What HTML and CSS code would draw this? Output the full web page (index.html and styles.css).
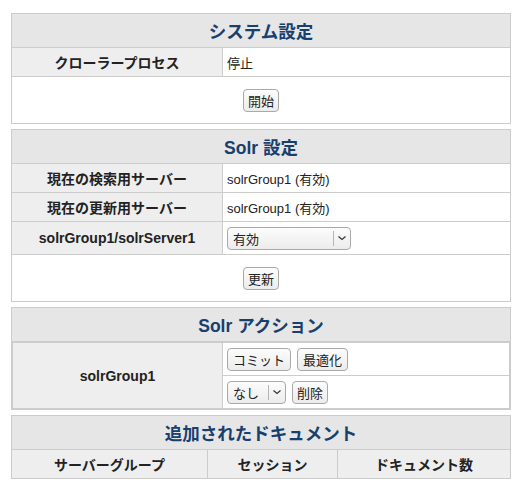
FILE: index.html
```html
<!DOCTYPE html>
<html lang="ja">
<head>
<meta charset="utf-8">
<title>システム設定</title>
<link rel="stylesheet" href="styles.css">
</head>
<body>
<div class="page">
  <table class="panel">
    <tr><th colspan="2" class="title">システム設定</th></tr>
    <tr><th class="label">クローラープロセス</th><td class="value">停止</td></tr>
    <tr><td colspan="2" class="actions"><button class="btn">開始</button></td></tr>
  </table>

  <table class="panel">
    <tr><th colspan="2" class="title">Solr 設定</th></tr>
    <tr><th class="label">現在の検索用サーバー</th><td class="value">solrGroup1 (有効)</td></tr>
    <tr><th class="label">現在の更新用サーバー</th><td class="value">solrGroup1 (有効)</td></tr>
    <tr><th class="label">solrGroup1/solrServer1</th><td class="value select-cell"><span class="select wide"><span class="select-text">有効</span><span class="select-arrow"><svg width="10" height="6" viewBox="0 0 10 6"><path d="M1.5 1.5 L5 4.5 L8.5 1.5" fill="none" stroke="#333" stroke-width="1.2"/></svg></span></span></td></tr>
    <tr><td colspan="2" class="actions"><button class="btn">更新</button></td></tr>
  </table>

  <table class="panel">
    <tr><th class="title">Solr アクション</th></tr>
    <tr><td class="nested-cell">
      <table class="inner">
        <tr>
          <th rowspan="2" class="label group">solrGroup1</th>
          <td class="value btn-cell"><button class="btn wide-pad">コミット</button><button class="btn wide-pad">最適化</button></td>
        </tr>
        <tr>
          <td class="value btn-cell"><span class="select small"><span class="select-text">なし</span><span class="select-arrow"><svg width="10" height="6" viewBox="0 0 10 6"><path d="M1.5 1.5 L5 4.5 L8.5 1.5" fill="none" stroke="#333" stroke-width="1.2"/></svg></span></span><button class="btn">削除</button></td>
        </tr>
      </table>
    </td></tr>
  </table>

  <table class="panel docs">
    <tr><th colspan="3" class="title">追加されたドキュメント</th></tr>
    <tr><th class="col1">サーバーグループ</th><th class="col2">セッション</th><th class="col3">ドキュメント数</th></tr>
  </table>
</div>
</body>
</html>
```

FILE: styles.css
```css
* { box-sizing: border-box; }
body {
  margin: 0;
  background: #fff;
  font-family: "Liberation Sans", "Noto Sans CJK JP", sans-serif;
  font-size: 13px;
  color: #222;
}
.page {
  padding: 13px 9px 0 11px;
  display: flex;
  flex-direction: column;
  gap: 5px;
}
.panel {
  width: 500px;
  border-collapse: collapse;
  border: 1px solid #ccc;
}
.panel th, .panel td {
  border: 1px solid #ccc;
}
.title {
  background: #e6e6e6;
  color: #17406f;
  font-size: 17.5px;
  font-weight: bold;
  height: 34px;
  padding: 0;
  text-align: center;
}
.label {
  background: #eeeeee;
  font-size: 14px;
  font-weight: bold;
  width: 211px;
  height: 29px;
  padding: 0 4px;
  text-align: center;
}
.value {
  text-align: left;
  padding: 0 4px;
  height: 29px;
}
.select-cell { height: 33px; }
.actions {
  text-align: center;
  height: 47px;
  padding: 0;
}
.btn {
  font-family: "Liberation Sans", "Noto Sans CJK JP", sans-serif;
  font-size: 13px;
  color: #222;
  height: 23px;
  padding: 0 4px;
  border: 1px solid #a9a9a9;
  border-radius: 4px;
  background: linear-gradient(#fcfcfc, #ececec);
  vertical-align: middle;
}
.btn.wide-pad { padding: 0 5px; }
.select {
  display: inline-flex;
  align-items: stretch;
  height: 23px;
  border: 1px solid #a9a9a9;
  border-radius: 4px;
  background: linear-gradient(#fcfcfc, #ececec);
  vertical-align: middle;
}
.select-text {
  display: flex;
  align-items: center;
  padding: 0 5px;
  flex: 1;
}
.select-arrow {
  display: flex;
  align-items: center;
  justify-content: center;
  width: 17px;
  border-left: 1px solid #b5b5b5;
  margin: 3px 0;
}
.select.wide { width: 124px; }
.select.small { width: 59px; }
.nested-cell { padding: 0; }
.inner {
  width: 100%;
  border-collapse: collapse;
  border: 1px solid #ccc;
}
.inner th, .inner td { border: 1px solid #ccc; }
.group { width: 210px; height: 66px; }
.btn-cell { height: 33px; padding: 0 4px; }
.btn-cell .btn + .btn, .btn-cell .select + .btn { margin-left: 6px; }
.docs th { background: #eeeeee; font-size: 14px; font-weight: bold; height: 29px; }
.docs .title { background: #e6e6e6; height: 34px; font-size: 17.5px; }
.docs .col1 { width: 196px; }
.docs .col2 { width: 130px; }
```
